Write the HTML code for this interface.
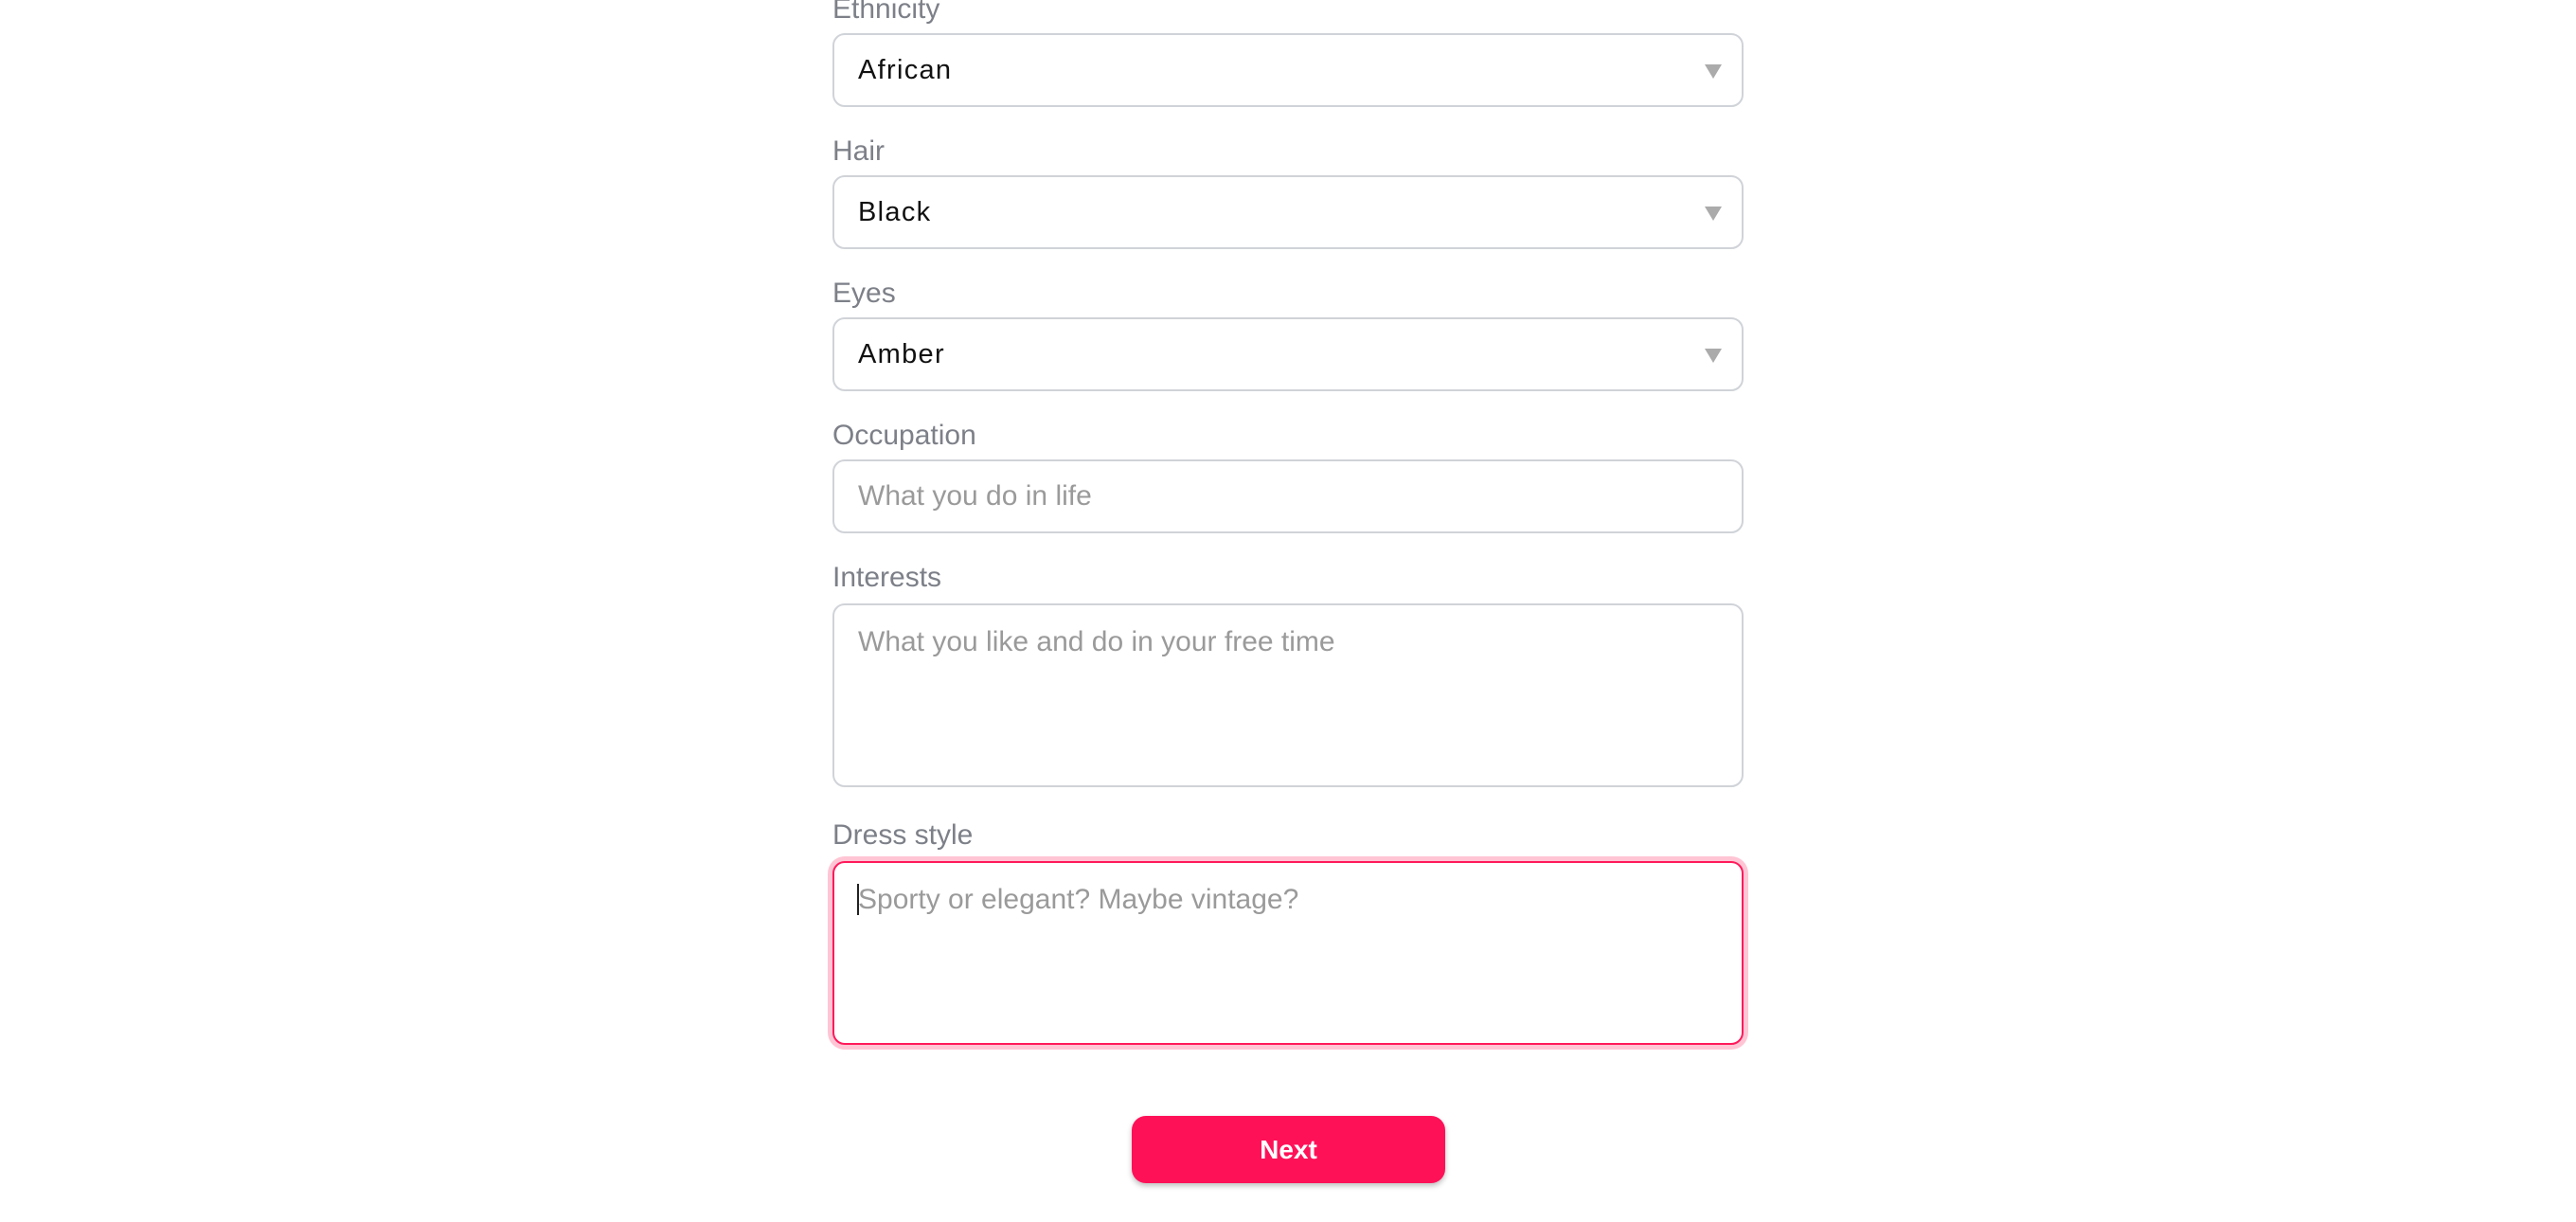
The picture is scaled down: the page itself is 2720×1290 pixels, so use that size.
<!DOCTYPE html>
<html><head><meta charset="utf-8"><style>
body{margin:0;width:2720px;height:1290px;background:#fff;position:relative;overflow:hidden;font-family:"Liberation Sans",Arial,sans-serif}
.l{position:absolute;left:879px;font-size:30px;color:#7d8088;line-height:34px}
.b{position:absolute;left:879px;width:962px;border:2px solid #d0d3d8;border-radius:13px;box-sizing:border-box;background:#fff}
.v{position:absolute;left:25px;font-size:29px;color:#111;line-height:34px;letter-spacing:1.3px}
.p{position:absolute;left:25px;font-size:30px;color:#9a9a9a;line-height:34px}
.a{position:absolute;right:21px;top:31px;width:0;height:0;border-left:9px solid transparent;border-right:9px solid transparent;border-top:15px solid #ababab}
</style></head><body>
<div class="l" style="top:-7px">Ethnicity</div>
<div class="b" style="top:35px;height:78px"><div class="v" style="top:20px">African</div><div class="a"></div></div>
<div class="l" style="top:143px">Hair</div>
<div class="b" style="top:185px;height:78px"><div class="v" style="top:20px">Black</div><div class="a"></div></div>
<div class="l" style="top:293px">Eyes</div>
<div class="b" style="top:335px;height:78px"><div class="v" style="top:20px">Amber</div><div class="a"></div></div>
<div class="l" style="top:443px">Occupation</div>
<div class="b" style="top:485px;height:78px"><div class="p" style="top:20px">What you do in life</div></div>
<div class="l" style="top:593px">Interests</div>
<div class="b" style="top:637px;height:194px"><div class="p" style="top:22px">What you like and do in your free time</div></div>
<div class="l" style="top:865px">Dress style</div>
<div class="b" style="top:909px;height:194px;border-color:#ff1a5b;box-shadow:0 0 0 5px #ffc5d5"><div style="position:absolute;left:24px;top:22px;width:2px;height:33px;background:#222"></div><div class="p" style="top:22px">Sporty or elegant? Maybe vintage?</div></div>
<div style="position:absolute;left:1195px;top:1178px;width:331px;height:71px;background:#ff1158;border-radius:15px;box-shadow:0 3px 6px rgba(0,0,0,0.25);color:#fff;font-weight:bold;font-size:28px;text-align:center;line-height:71px">Next</div>
</body></html>
